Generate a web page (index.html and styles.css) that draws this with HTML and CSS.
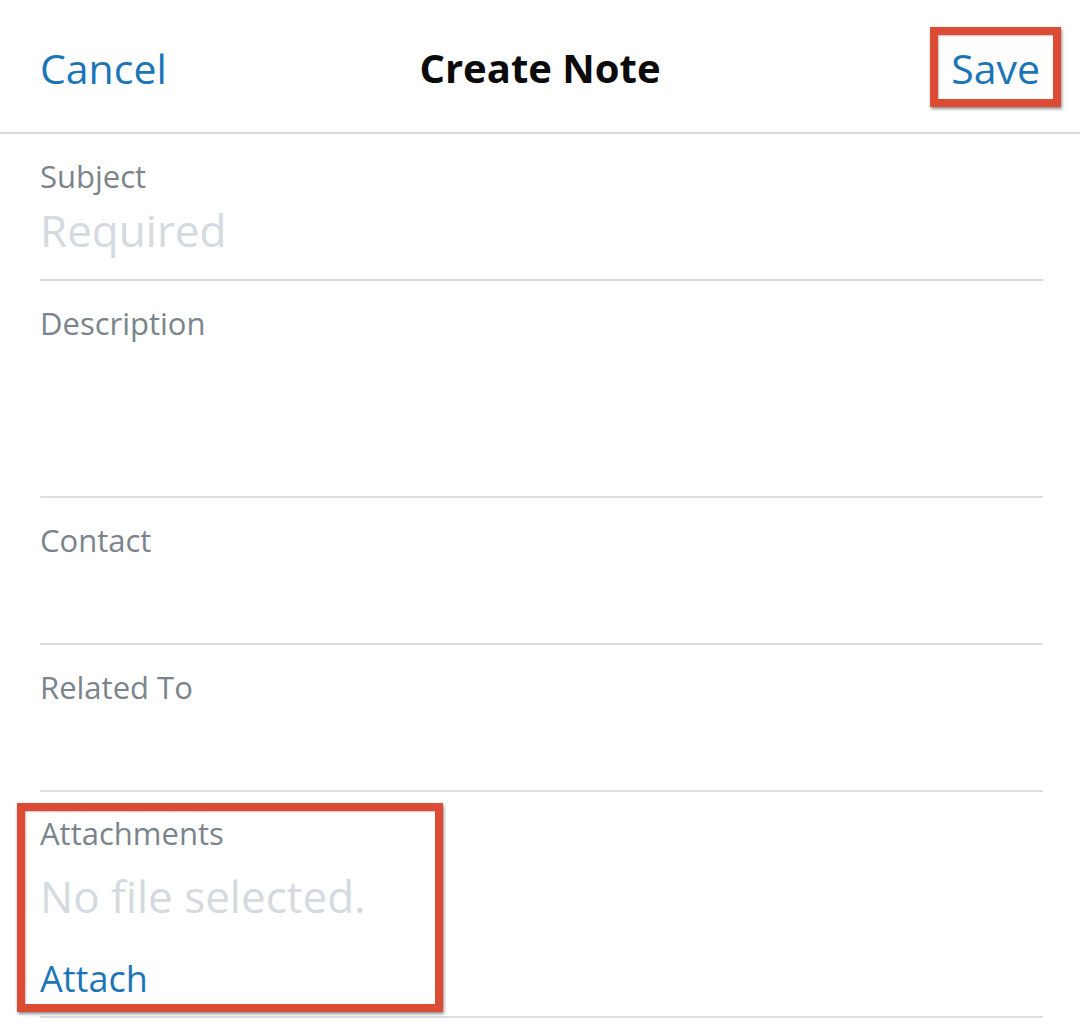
FILE: index.html
```html
<!DOCTYPE html>
<html>
<head>
<meta charset="utf-8">
<link rel="stylesheet" href="styles.css">
</head>
<body>
<div class="app">
  <header class="topbar">
    <span class="nav-btn cancel">Cancel</span>
    <span class="title">Create Note</span>
    <span class="nav-btn save"><span class="save-text">Save</span><span class="highlight save-hl"></span></span>
  </header>
  <main class="form">
    <div class="field">
      <div class="label">Subject</div>
      <div class="value placeholder">Required</div>
    </div>
    <div class="field">
      <div class="label">Description</div>
      <div class="value tall"></div>
    </div>
    <div class="field">
      <div class="label">Contact</div>
      <div class="value"></div>
    </div>
    <div class="field">
      <div class="label">Related To</div>
      <div class="value"></div>
    </div>
    <div class="field attachments">
      <div class="label">Attachments</div>
      <div class="value placeholder">No file selected.</div>
      <div class="attach">Attach</div>
      <span class="highlight attach-hl"></span>
    </div>
  </main>
</div>
</body>
</html>
```
FILE: styles.css
```css
* { box-sizing: border-box; }
html, body { margin: 0; padding: 0; background: #ffffff; }
body { font-family: "Open Sans", "Noto Sans", sans-serif; }
.app { width: 1080px; height: 1029px; overflow: hidden; }

.topbar {
  height: 134px;
  border-bottom: 2px solid #dadbdc;
  display: grid;
  grid-template-columns: 1fr auto 1fr;
  align-items: center;
  padding: 3px 40px 0;
}
.nav-btn { font-size: 41px; line-height: 56px; color: #1b75b6; }
.cancel { justify-self: start; }
.save { justify-self: end; position: relative; }
.title { font-size: 40px; line-height: 56px; font-weight: 700; color: #0b0b0b; }

.highlight {
  position: absolute;
  border: 8px solid #dc4b33;
  box-shadow: 1px 2px 3px rgba(0,0,0,0.45), inset 1px 1px 2px rgba(0,0,0,0.25);
  pointer-events: none;
}
.save-hl { left: -21px; top: -13px; width: 131px; height: 80px; }

.form { margin: 0 37px 0 40px; }
.field {
  border-bottom: 2px solid #dadee2;
  padding: 21px 0 19px;
  position: relative;
}
.label { font-size: 31px; line-height: 42px; color: #7b848c; }
.value { font-size: 44px; line-height: 60px; min-height: 60px; margin-top: 3px; }
.value.tall { min-height: 130px; }
.placeholder { color: #d4dae0; }

.attachments { padding-top: 20px; padding-bottom: 13px; }
.attachments .value { margin-top: 12px; }
.attach { font-size: 36px; line-height: 49px; color: #1b75b6; margin-top: 28px; }
.attach-hl { left: -23px; top: 11px; width: 426px; height: 209px; }
```
